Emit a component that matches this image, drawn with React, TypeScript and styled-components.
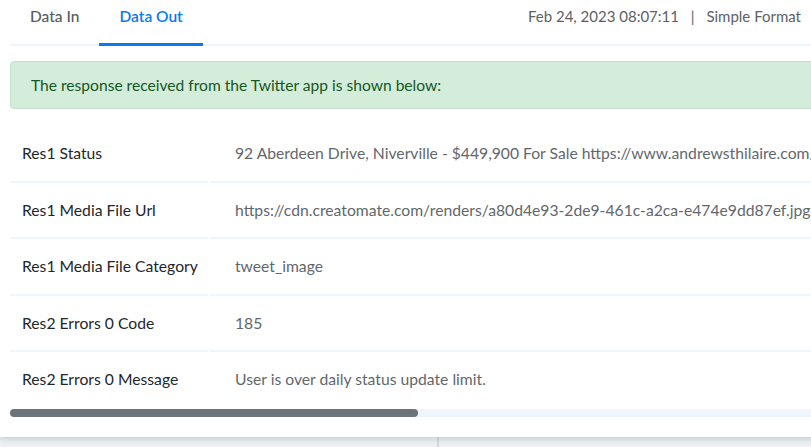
import React from "react";
import styled, { createGlobalStyle } from "styled-components";

interface FieldRow {
  label: string;
  value: string;
}

const rows: FieldRow[] = [
  {
    label: "Res1 Status",
    value:
      "92 Aberdeen Drive, Niverville - $449,900 For Sale https://www.andrewsthilaire.com/",
  },
  {
    label: "Res1 Media File Url",
    value:
      "https://cdn.creatomate.com/renders/a80d4e93-2de9-461c-a2ca-e474e9dd87ef.jpg",
  },
  { label: "Res1 Media File Category", value: "tweet_image" },
  { label: "Res2 Errors 0 Code", value: "185" },
  { label: "Res2 Errors 0 Message", value: "User is over daily status update limit." },
];

export default function App() {
  return (
    <>
      <GlobalStyle />
      <Page>
        <Panel>
          <TabBar>
            <Tabs>
              <Tab>Data In</Tab>
              <Tab $active>Data Out</Tab>
            </Tabs>
            <Meta>
              Feb 24, 2023 08:07:11 <Divider>|</Divider> Simple Format
            </Meta>
          </TabBar>

          <Alert>The response received from the Twitter app is shown below:</Alert>

          <Table>
            {rows.map((row, i) => (
              <Row key={row.label} $last={i === rows.length - 1}>
                <Label>{row.label}</Label>
                <Value>{row.value}</Value>
              </Row>
            ))}
          </Table>

          <ScrollTrack>
            <ScrollThumb />
          </ScrollTrack>
        </Panel>
        <Footer>
          <FooterCell />
          <FooterCell />
        </Footer>
      </Page>
    </>
  );
}

const GlobalStyle = createGlobalStyle`
  html, body {
    margin: 0;
    padding: 0;
    overflow: hidden;
    background: #eef1f4;
  }
  body {
    font-family: Lato, "Open Sans", sans-serif;
  }
`;

const Page = styled.div`
  width: 811px;
  height: 447px;
  display: flex;
  flex-direction: column;
  overflow: hidden;
`;

const Panel = styled.div`
  height: 437px;
  width: 1200px;
  background: #ffffff;
  box-shadow: 0 2px 6px rgba(120, 135, 150, 0.35);
  position: relative;
  z-index: 1;
  box-sizing: border-box;
  padding-left: 10px;
`;

const TabBar = styled.div`
  width: 801px;
  height: 44px;
  box-sizing: content-box;
  display: flex;
  align-items: stretch;
  justify-content: space-between;
  border-bottom: 2px solid #eef5fd;
  padding-right: 10px;
  margin-right: -10px;
`;

const Tabs = styled.div`
  display: flex;
`;

const Tab = styled.div<{ $active?: boolean }>`
  padding: 0 20px;
  font-size: 15.5px;
  line-height: 32px;
  color: ${(p) => (p.$active ? "#0b78f0" : "#555b61")};
  font-weight: ${(p) => (p.$active ? 600 : 500)};
  border-bottom: 3px solid ${(p) => (p.$active ? "#0b78f0" : "transparent")};
  margin-bottom: -2px;
  box-sizing: border-box;
  height: 46px;
`;

const Meta = styled.div`
  font-size: 15px;
  color: #5c6166;
  line-height: 32px;
  white-space: nowrap;
  margin-right: 10px;
`;

const Divider = styled.span`
  margin: 0 8px;
`;

const Alert = styled.div`
  margin-top: 15px;
  height: 48px;
  box-sizing: border-box;
  background: #d4ecda;
  border: 1px solid #c3e4cb;
  border-radius: 4px;
  color: #155724;
  font-size: 15.6px;
  display: flex;
  align-items: center;
  padding-left: 20px;
`;

const Table = styled.div`
  margin-top: 17px;
  display: flex;
  flex-direction: column;
`;

const Row = styled.div<{ $last?: boolean }>`
  display: grid;
  grid-template-columns: 198px 1fr;
  column-gap: 2px;
  height: 56.5px;
  & > * {
    border-bottom: 2px solid ${(p) => (p.$last ? "transparent" : "#eef5fd")};
  }
`;

const Label = styled.div`
  display: flex;
  align-items: center;
  padding-left: 12px;
  font-size: 15.7px;
  color: #222629;
  white-space: nowrap;
`;

const Value = styled.div`
  display: flex;
  align-items: center;
  padding-left: 25px;
  font-size: 15.7px;
  color: #62676c;
  white-space: nowrap;
`;

const ScrollTrack = styled.div`
  height: 8px;
  background: #eef5fd;
  border-radius: 4px;
`;

const ScrollThumb = styled.div`
  width: 408px;
  height: 8px;
  background: #6b737b;
  border-radius: 4px;
`;

const Footer = styled.div`
  flex: 1;
  display: grid;
  grid-template-columns: 437px 1fr;
`;

const FooterCell = styled.div`
  & + & {
    border-left: 2px solid #d3d7db;
  }
`;
